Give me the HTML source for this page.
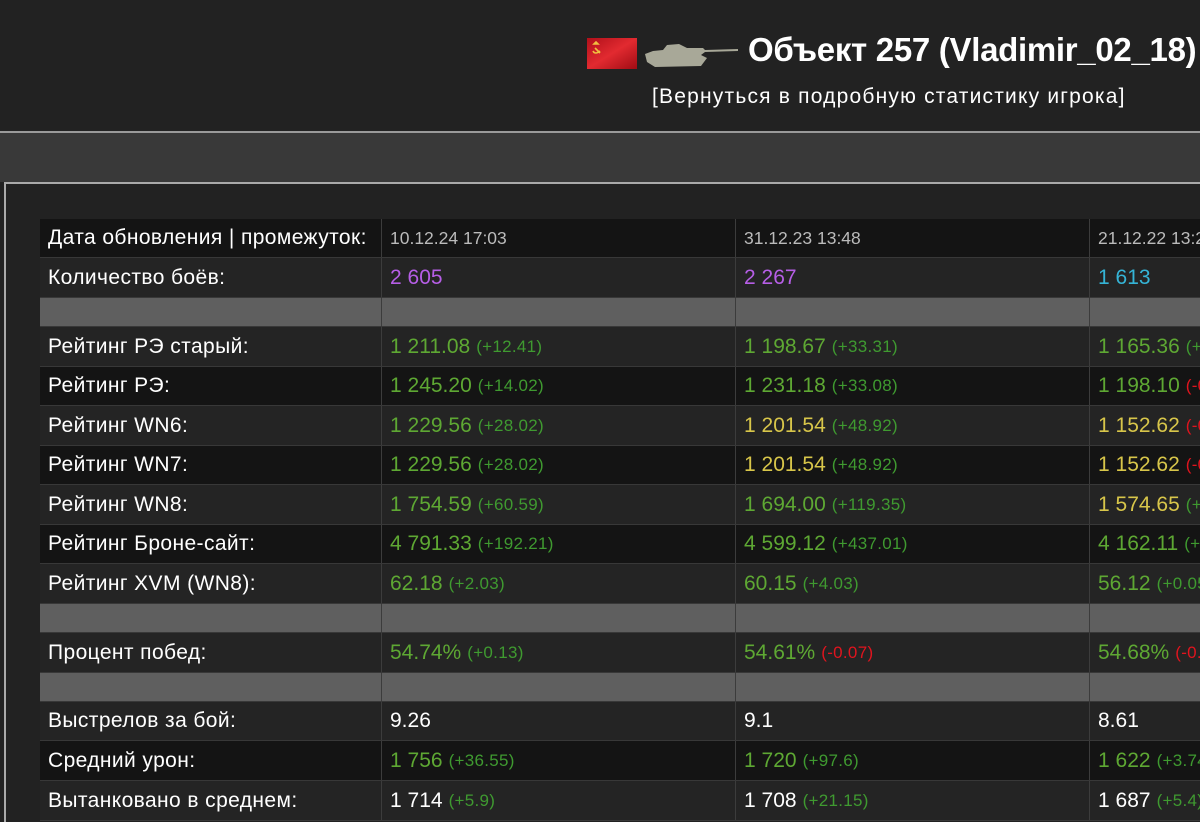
<!DOCTYPE html>
<html><head><meta charset="utf-8">
<style>
*{margin:0;padding:0;box-sizing:border-box}
html,body{width:1200px;height:815px;overflow:hidden;background:#222;font-family:"Liberation Sans",sans-serif;color:#eee}
#hdr{position:absolute;left:0;top:0;width:1200px;height:132px;background:#222}
#l1{position:absolute;left:0;top:131px;width:1200px;height:2px;background:#9a9a9a}
#band{position:absolute;left:0;top:133px;width:1200px;height:49px;background:#393939}
#panel{position:absolute;left:4px;top:182px;width:1200px;height:640px;background:#222;border-left:2px solid #aaa;border-top:2px solid #aaa}
.title{position:absolute;left:748px;top:31px;font-size:33px;font-weight:bold;color:#fff;white-space:nowrap;letter-spacing:-0.3px}
.sub{position:absolute;left:652px;top:85px;font-size:21px;letter-spacing:1.2px;color:#fff;white-space:nowrap}
.row{position:absolute;left:40px;width:1200px;overflow:hidden;border-bottom:1px solid #383838}
.row div{position:absolute;top:0;height:100%;display:flex;align-items:center;white-space:nowrap;font-size:21px}
.c0{left:0;width:341px;padding-left:8px;color:#fff;letter-spacing:0.4px}
.c1{left:341px;width:354px;padding-left:8px;border-left:1px solid #3c3c3c}
.c2{left:695px;width:354px;padding-left:8px;border-left:1px solid #3c3c3c}
.c3{left:1049px;width:300px;padding-left:8px;border-left:1px solid #3c3c3c}
.a{background:#242424}.b{background:#141414}.s{background:#5f5f5f}
.g{color:#5ea833}.y{color:#d8c64a}.p{color:#b65ee6}.cy{color:#35b4d6}.w{color:#fff}.d{color:#bbb;font-size:17.5px!important}
.dg{color:#3f9a30;font-size:17px;letter-spacing:0.3px;margin-left:6px}.dr{color:#e0141e;font-size:17px;letter-spacing:0.3px;margin-left:6px}
</style></head><body>
<div id="hdr">
<svg style="position:absolute;left:587px;top:38px" width="50" height="31" viewBox="0 0 50 31">
<defs><linearGradient id="f" x1="0" y1="0" x2="1" y2="1"><stop offset="0" stop-color="#b0101a"/><stop offset=".5" stop-color="#e22a30"/><stop offset="1" stop-color="#a00c14"/></linearGradient></defs>
<rect width="50" height="31" fill="url(#f)"/>
<path d="M7 6 l2 -2 l2 2 z M6 13 q2 4 7 0 M8 10 l5 5" stroke="#f0c040" stroke-width="1.6" fill="none"/>
</svg>
<svg style="position:absolute;left:643px;top:40px" width="96" height="29" viewBox="0 0 96 29">
<path d="M2 14 L10 11 L20 10 L24 5 L36 4 L44 8 L60 8 L62 10 L95 9 L95 11 L62 12 L58 15 L64 18 L58 26 L12 27 L4 22 Z" fill="#a8a898"/>
</svg>
<div class="title">Объект 257 (Vladimir_02_18)</div>
<div class="sub">[Вернуться в подробную статистику игрока]</div>
</div>
<div id="l1"></div><div id="band"></div><div id="panel"></div>

<div class="row b" style="top:219px;height:39px"><div class="c0">Дата обновления | промежуток:</div><div class="c1 d">10.12.24 17:03</div><div class="c2 d">31.12.23 13:48</div><div class="c3 d">21.12.22 13:25</div></div>
<div class="row a" style="top:258px;height:40px"><div class="c0">Количество боёв:</div><div class="c1 p">2 605</div><div class="c2 p">2 267</div><div class="c3 cy">1 613</div></div>
<div class="row s" style="top:298px;height:29px"><div class="c0"></div><div class="c1"></div><div class="c2"></div><div class="c3"></div></div>
<div class="row a" style="top:327px;height:40px"><div class="c0">Рейтинг РЭ старый:</div><div class="c1 g">1 211.08<span class="dg">(+12.41)</span></div><div class="c2 g">1 198.67<span class="dg">(+33.31)</span></div><div class="c3 g">1 165.36<span class="dg">(+2.10)</span></div></div>
<div class="row b" style="top:367px;height:39px"><div class="c0">Рейтинг РЭ:</div><div class="c1 g">1 245.20<span class="dg">(+14.02)</span></div><div class="c2 g">1 231.18<span class="dg">(+33.08)</span></div><div class="c3 g">1 198.10<span class="dr">(-0.52)</span></div></div>
<div class="row a" style="top:406px;height:40px"><div class="c0">Рейтинг WN6:</div><div class="c1 g">1 229.56<span class="dg">(+28.02)</span></div><div class="c2 y">1 201.54<span class="dg">(+48.92)</span></div><div class="c3 y">1 152.62<span class="dr">(-0.41)</span></div></div>
<div class="row b" style="top:446px;height:39px"><div class="c0">Рейтинг WN7:</div><div class="c1 g">1 229.56<span class="dg">(+28.02)</span></div><div class="c2 y">1 201.54<span class="dg">(+48.92)</span></div><div class="c3 y">1 152.62<span class="dr">(-0.41)</span></div></div>
<div class="row a" style="top:485px;height:40px"><div class="c0">Рейтинг WN8:</div><div class="c1 g">1 754.59<span class="dg">(+60.59)</span></div><div class="c2 g">1 694.00<span class="dg">(+119.35)</span></div><div class="c3 y">1 574.65<span class="dg">(+3.20)</span></div></div>
<div class="row b" style="top:525px;height:39px"><div class="c0">Рейтинг Броне-сайт:</div><div class="c1 g">4 791.33<span class="dg">(+192.21)</span></div><div class="c2 g">4 599.12<span class="dg">(+437.01)</span></div><div class="c3 g">4 162.11<span class="dg">(+5.12)</span></div></div>
<div class="row a" style="top:564px;height:40px"><div class="c0">Рейтинг XVM (WN8):</div><div class="c1 g">62.18<span class="dg">(+2.03)</span></div><div class="c2 g">60.15<span class="dg">(+4.03)</span></div><div class="c3 g">56.12<span class="dg">(+0.05)</span></div></div>
<div class="row s" style="top:604px;height:29px"><div class="c0"></div><div class="c1"></div><div class="c2"></div><div class="c3"></div></div>
<div class="row a" style="top:633px;height:40px"><div class="c0">Процент побед:</div><div class="c1 g">54.74%<span class="dg">(+0.13)</span></div><div class="c2 g">54.61%<span class="dr">(-0.07)</span></div><div class="c3 g">54.68%<span class="dr">(-0.12)</span></div></div>
<div class="row s" style="top:673px;height:29px"><div class="c0"></div><div class="c1"></div><div class="c2"></div><div class="c3"></div></div>
<div class="row a" style="top:702px;height:39px"><div class="c0">Выстрелов за бой:</div><div class="c1 w">9.26</div><div class="c2 w">9.1</div><div class="c3 w">8.61</div></div>
<div class="row b" style="top:741px;height:40px"><div class="c0">Средний урон:</div><div class="c1 g">1 756<span class="dg">(+36.55)</span></div><div class="c2 g">1 720<span class="dg">(+97.6)</span></div><div class="c3 g">1 622<span class="dg">(+3.74)</span></div></div>
<div class="row a" style="top:781px;height:40px"><div class="c0">Вытанковано в среднем:</div><div class="c1 w">1 714<span class="dg">(+5.9)</span></div><div class="c2 w">1 708<span class="dg">(+21.15)</span></div><div class="c3 w">1 687<span class="dg">(+5.4)</span></div></div>
</body></html>
